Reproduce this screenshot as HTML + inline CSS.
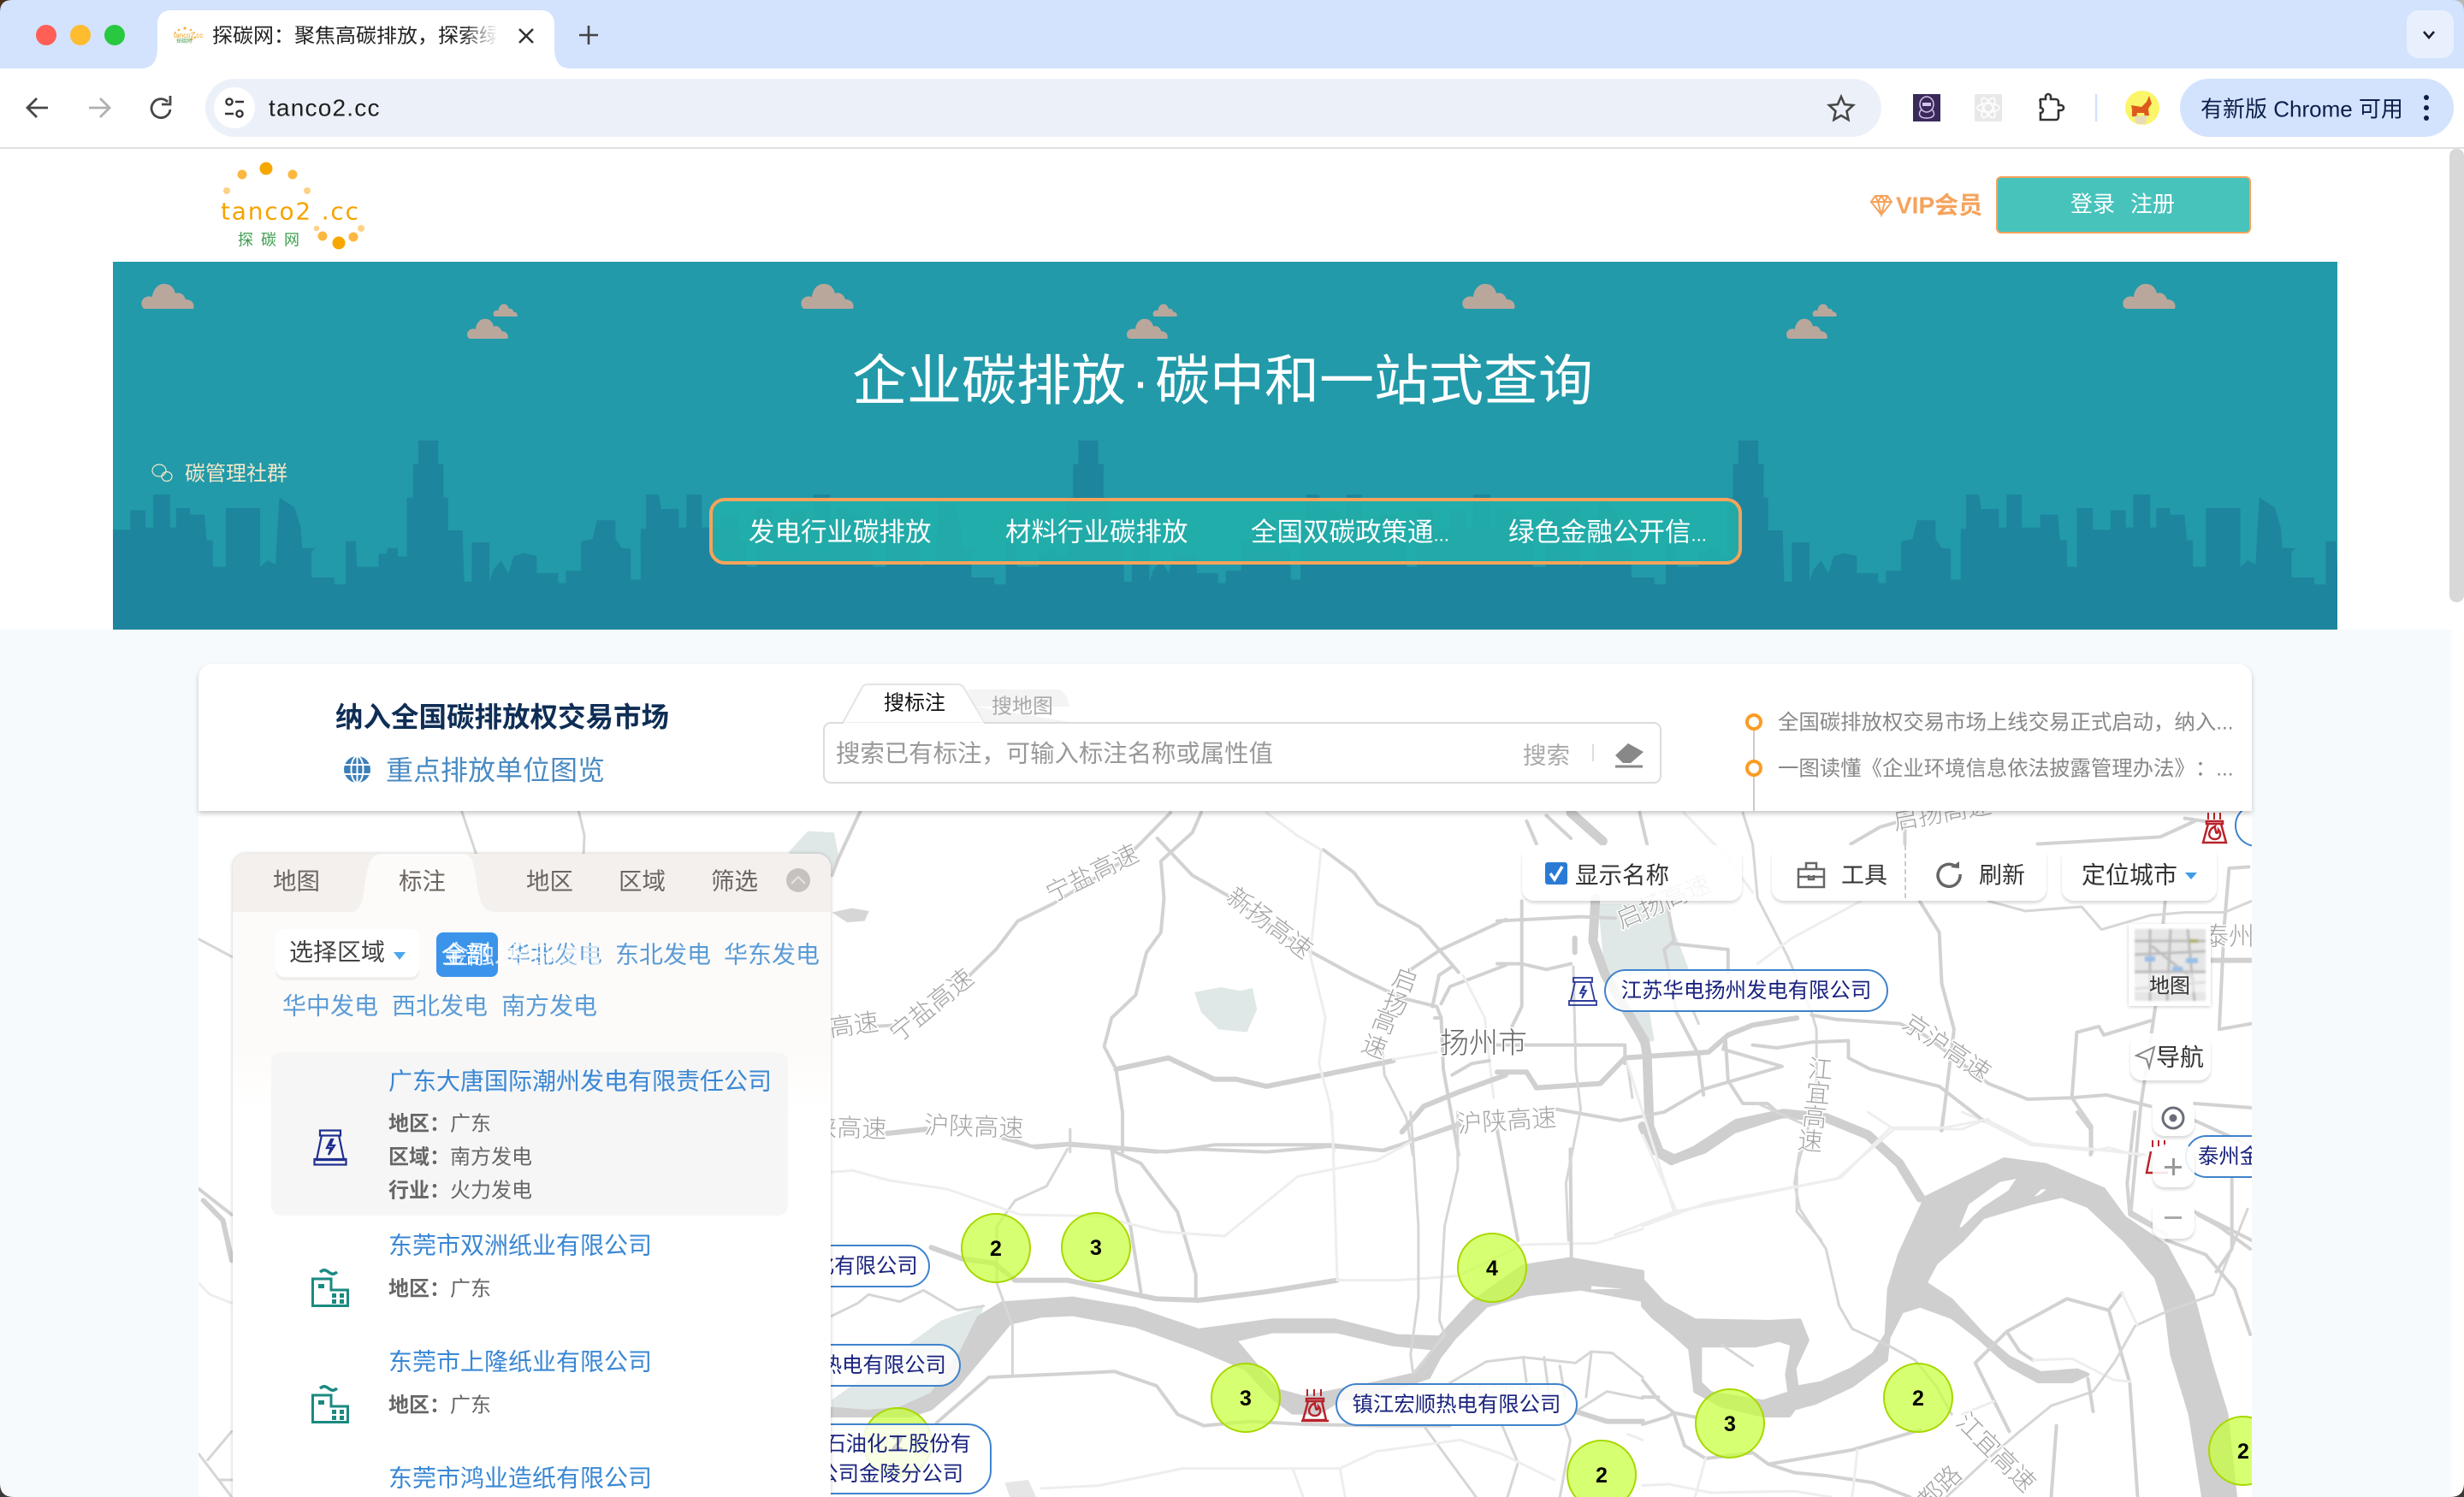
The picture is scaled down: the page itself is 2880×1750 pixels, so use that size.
<!DOCTYPE html>
<html lang="zh"><head><meta charset="utf-8"><title>探碳网</title>
<style>
html,body{margin:0;padding:0;width:2880px;height:1750px;overflow:hidden;background:#fff}
body{position:relative;font-family:"Liberation Sans","Noto Sans CJK SC",sans-serif;color:#222}
.a{position:absolute}
.t{position:absolute;white-space:nowrap;line-height:1;transform:translateY(1.5px);text-spacing-trim:space-all}
svg{position:absolute;overflow:visible}
.r,.m,.b,.l,.n{fill:none;vector-effect:non-scaling-stroke;stroke-linejoin:round;stroke-linecap:round}
.r{stroke:#d2d2d2;stroke-width:4}
.n{stroke:#d6d6d6;stroke-width:3}
.m{stroke:#d0d0d0;stroke-width:6}
.b{stroke:#cfcfcf;stroke-width:11}
.l{stroke:#eeeeee;stroke-width:3}
.rv{fill:#cfcfcf;stroke:#cfcfcf;stroke-width:4;stroke-linejoin:round;vector-effect:non-scaling-stroke}
.ml{font-size:29px;fill:#a3a3a3;stroke:#fff;stroke-width:3px;paint-order:stroke;text-anchor:middle;font-family:"Noto Sans CJK SC",sans-serif;font-weight:300}
.cl{position:absolute;white-space:nowrap;box-sizing:border-box;border:2px solid #3f83cc;border-radius:25px;background:rgba(255,255,255,.82);color:#1a237e;font-size:24.400px;line-height:48px;height:50px;text-align:center}
.ctl{position:absolute;background:rgba(255,255,255,.88);border-radius:14px;box-shadow:0 3px 3px rgba(0,0,0,.14)}
.blue{color:#5a9bd6}
.link{color:#3a87d4}
.lab{font-weight:700;color:#666}
.val{color:#666}
</style></head>
<body>
<!-- page background below banner -->
<div class="a" style="left:0;top:736px;width:2865px;height:1014px;background:#f7fafd"></div>
<div class="a" style="left:2865px;top:704px;width:15px;height:1046px;background:#fff"></div>
<!-- chrome -->
<div class="a" style="left:0;top:0;width:2880px;height:80px;background:#d3e3fd"></div>
<svg style="left:0;top:0" width="2880" height="180">
<path d="M165 80c14 0 19-10 19-24V28c0-10 6-16 16-16h432c10 0 16 6 16 16v28c0 14 5 24 18 24z" fill="#fff"/>
<circle cx="54" cy="41" r="12" fill="#ff5f57"/><circle cx="94" cy="41" r="12" fill="#febc2e"/><circle cx="134" cy="41" r="12" fill="#28c840"/>
<g fill="#f5b041"><circle cx="216" cy="33" r="1.6"/><circle cx="209" cy="35" r="1.3"/><circle cx="223" cy="35" r="1.3"/><circle cx="205" cy="38" r="1"/><circle cx="227" cy="38" r="1"/><circle cx="224" cy="46" r="1.5"/><circle cx="228" cy="44" r="1.2"/></g>
<text x="203" y="44" font-size="8" fill="#f0a020" font-family="Liberation Sans">tanco2.cc</text>
<text x="206" y="50" font-size="6" fill="#4a9f55" font-family="Noto Sans CJK SC">探碳网</text>
<path d="M607 34l16 16M623 34l-16 16" stroke="#333" stroke-width="2.6"/>
<path d="M688 30v22M677 41h22" stroke="#444" stroke-width="2.6"/>
<rect x="2813" y="12" width="55" height="56" rx="14" fill="#e9f0fd"/>
<path d="M2833 37l6 7 6-7" stroke="#1c1c2c" stroke-width="2.6" fill="none"/>
<path d="M0 180V92q0-12 12-12h2856q12 0 12 12v88z" fill="#fff"/>
<path d="M0 173h2880" stroke="#e0e0e0" stroke-width="2"/>
<path d="M56 126H33M43 115l-11 11 11 11" stroke="#474747" stroke-width="2.8" fill="none"/>
<path d="M104 126h23M117 115l11 11-11 11" stroke="#b0b0b0" stroke-width="2.8" fill="none"/>
<path d="M196 119a11 11 0 1 0 3 9" stroke="#474747" stroke-width="2.8" fill="none"/><path d="M199 112v10h-10" stroke="#474747" stroke-width="2.8" fill="none"/>
<rect x="240" y="92" width="1959" height="68" rx="34" fill="#ecf1f9"/>
<rect x="250" y="102" width="48" height="48" rx="24" fill="#fff"/>
<circle cx="268" cy="119" r="3.6" fill="none" stroke="#333" stroke-width="2.4"/><path d="M275 119h10M263 133h10" stroke="#333" stroke-width="2.6"/><circle cx="280" cy="133" r="3.6" fill="none" stroke="#333" stroke-width="2.4"/>
<path d="M2152 113l4 9 10 1-7.500 7 2 10-8.500-5-8.500 5 2-10-7.500-7 10-1z" fill="none" stroke="#474747" stroke-width="2.6"/>
<rect x="2236" y="110" width="32" height="32" fill="#3a2a5c"/>
<ellipse cx="2252" cy="122" rx="8" ry="9" fill="none" stroke="#d5c3ec" stroke-width="1.5"/><path d="M2246 128c-4 4-4 10 6 10s10-6 6-10" fill="none" stroke="#d5c3ec" stroke-width="1.500"/><rect x="2247" y="120" width="10" height="4" fill="#d5c3ec"/>
<rect x="2308" y="110" width="32" height="32" rx="2" fill="#e8e8e8"/>
<g fill="none" stroke="#fff" stroke-width="1.600"><ellipse cx="2324" cy="126" rx="13" ry="5"/><ellipse cx="2324" cy="126" rx="13" ry="5" transform="rotate(60 2324 126)"/><ellipse cx="2324" cy="126" rx="13" ry="5" transform="rotate(120 2324 126)"/></g>
<path d="M2387 116h6v-3a3 3 0 0 1 6 0v3h6a3 3 0 0 1 3 3v4h3a3 3 0 0 1 0 6h-3v8a3 3 0 0 1-3 3h-18v-8a3 3 0 0 0 0-6v-7a3 3 0 0 1 0-3z" fill="none" stroke="#333" stroke-width="2.600" transform="translate(-2 0)"/>
<path d="M2450 110v32" stroke="#d3e3fd" stroke-width="2.500"/>
<circle cx="2504" cy="126" r="20" fill="#fbf56a"/>
<path d="M2491 123l12 2 6-6 3-7 3 9-4 6 1 8-5 1-1-4-8 0-1 5-5-1 0-8z" fill="#dd5a1e"/><path d="M2494 136l16-1-2 10h-11z" fill="#e8ddb8"/>
<rect x="2548" y="92" width="320" height="68" rx="34" fill="#d3e3fd"/>
<g fill="#0b1f4b"><circle cx="2836" cy="114" r="3"/><circle cx="2836" cy="126" r="3"/><circle cx="2836" cy="138" r="3"/></g>
</svg>
<div class="t" style="left:248px;top:29px;width:332px;overflow:hidden;font-size:24px;color:#222">探碳网：聚焦高碳排放，探索绿色</div>
<div class="a" style="left:540px;top:26px;width:42px;height:30px;background:linear-gradient(90deg,rgba(255,255,255,0),#fff)"></div>
<div class="t" style="left:314px;top:111px;font-size:28px;letter-spacing:1.200px;color:#1f1f1f">tanco2.cc</div>
<div class="t" style="left:2572px;top:113px;font-size:26px;color:#0b1f4b">有新版 Chrome 可用</div>

<!-- site header -->
<svg style="left:0;top:0" width="2880" height="300">
<g fill="#f6a800"><circle cx="311" cy="197" r="7.500"/><circle cx="396" cy="284" r="7.500"/></g>
<g fill="#fbb740"><circle cx="283" cy="204" r="5.500"/><circle cx="342" cy="204" r="5.500"/><circle cx="377" cy="276" r="5.500"/><circle cx="413" cy="277" r="5.500"/></g>
<g fill="#fdd186"><circle cx="265" cy="223" r="4"/><circle cx="359" cy="223" r="4"/><circle cx="370" cy="267" r="3.200"/><circle cx="422" cy="267" r="4"/></g>
</svg>
<div class="t" style="left:258px;top:232px;font-size:28px;letter-spacing:1.800px;color:#f5a300;font-family:'DejaVu Sans',sans-serif">tanco2 .cc</div>
<div class="t" style="left:278px;top:270px;font-size:18px;letter-spacing:9px;color:#3f9f4f">探碳网</div>
<svg style="left:2186px;top:228px" width="26" height="24"><path d="M6 1h14l5 7-12 15L1 8zM1 8h24M9 8l4 15 4-15M6 1l3 7 4-7 4 7 3-7" fill="none" stroke="#f5a35c" stroke-width="2"/></svg>
<div class="t" style="left:2216px;top:225px;font-size:28px;font-weight:700;color:#f5a35c">VIP会员</div>
<div class="a" style="left:2333px;top:206px;width:298px;height:67px;box-sizing:border-box;background:#47c3bc;border:2px solid #f5a35c;border-radius:6px"></div>
<div class="t" style="left:2420px;top:224px;font-size:26px;color:#fff">登录</div>
<div class="t" style="left:2490px;top:224px;font-size:26px;color:#fff">注册</div>
<div class="a" style="left:2863px;top:174px;width:17px;height:530px;background:#d8d8d8;border-radius:8px"></div>

<!-- banner -->
<div class="a" style="left:132px;top:306px;width:2600px;height:430px;overflow:hidden;background:#229aa9">
<svg style="left:-132px;top:-306px" width="2880" height="1750">
<defs>
<polygon id="sky" points="2,958 25,958 25,890 45,890 45,950 55,950 55,835 77,835 77,950 85,950 85,882 103,882 103,905 122,905 125,995 133,995 133,1088 150,1088 150,882 195,882 195,1088 205,1065 215,1080 217,980 220,845 240,880 248,950 250,1022 268,1022 262,1035 262,1125 292,1125 292,1150 307,1150 307,998 320,998 322,1088 350,1088 350,1042 360,1042 362,1022 375,1022 375,1052 387,1052 387,845 395,845 395,728 402,728 402,645 428,645 428,728 435,728 435,845 441,845 441,960 460,960 462,1140 472,1140 472,1002 495,1002 495,1140 500,1100 510,1065 520,1110 527,1050 540,1040 557,1050 557,1110 585,1110 585,1145 595,1145 595,1102 615,1102 615,1000 630,990 636,925 660,925 660,988 668,1022 680,1025 680,1133 693,1133 693,955 700,955 700,835 717,835 720,885 743,885 743,950 753,950 753,835 773,835 773,950 797,950 797,905 820,905 823,995 832,995 832,1088 845,1088 845,882 866,882 866,958 866,1310 2,1310"/>
<path id="c" d="M6 30C1 30 0 22 3 19C6 15 11 15 14 16C15 6 22 0 29 1C36 1 40 7 41 12C46 10 51 13 53 19C60 19 64 24 62 30Z" fill="#baa79c"/>
</defs>
<g transform="translate(130,300) scale(.8929,.3333)" fill="#1e859e">
<use href="#sky"/><use href="#sky" x="864"/><use href="#sky" x="1728"/><use href="#sky" x="2592"/>
</g>
<use href="#c" transform="translate(164,331)"/><use href="#c" transform="translate(935,331)"/><use href="#c" transform="translate(1708,331)"/><use href="#c" transform="translate(2480,331)"/>
<use href="#c" transform="translate(545,372) scale(.78,.8)"/><use href="#c" transform="translate(1316,372) scale(.78,.8)"/><use href="#c" transform="translate(2087,372) scale(.78,.8)"/>
<use href="#c" transform="translate(576,355) scale(.46,.5)"/><use href="#c" transform="translate(1347,355) scale(.46,.5)"/><use href="#c" transform="translate(2118,355) scale(.46,.5)"/>
<g fill="none" stroke="#f2e6c8" stroke-width="1.200"><ellipse cx="186" cy="550" rx="8" ry="7"/><ellipse cx="195" cy="557" rx="6" ry="5.500"/></g>
</svg>
</div>
<div class="t" style="left:996px;top:412px;font-size:64px;color:#fff">企业碳排放<span style="display:inline-block;width:34px;text-align:center">·</span>碳中和一站式查询</div>
<div class="t" style="left:216px;top:541px;font-size:24px;color:#f2e6c8">碳管理社群</div>
<div class="a" style="left:829px;top:582px;width:1207px;height:78px;box-sizing:border-box;background:rgba(34,176,170,.86);border:4px solid #f5a35c;border-radius:18px"></div>
<div class="t" style="left:875px;top:606px;font-size:30.500px;color:#fff">发电行业碳排放</div>
<div class="t" style="left:1175px;top:606px;font-size:30.500px;color:#fff">材料行业碳排放</div>
<div class="t" style="left:1462px;top:606px;font-size:30.500px;color:#fff">全国双碳政策通<span style="font-size:22px">...</span></div>
<div class="t" style="left:1763px;top:606px;font-size:30.500px;color:#fff">绿色金融公开信<span style="font-size:22px">...</span></div>

<!-- map -->
<div class="a" style="left:0;top:0;width:2880px;height:1750px;clip-path:inset(948px 248px 0 232px)">
<div class="a" style="left:232px;top:948px;width:2400px;height:802px;background:#fff"></div>
<svg style="left:0;top:0" width="2880" height="1750">
<!-- zoom 5 -->
<g transform="translate(230,750) scale(.5102,.3333)">
<path class="n" d="M607 595L640 745M875 595L888 680L886 745M0 1040L80 1105"/>
<path d="M1355 740L1400 665L1460 670L1470 750L1455 810Z" fill="#dfe8e7"/>
<path d="M1455 950L1500 935L1540 945L1530 980L1490 985Z" fill="#d6d6d6"/>
<path class="r" d="M1520 595L1470 760L1455 820"/>
</g>
<!-- zoom 6 -->
<g transform="translate(230,1240) scale(.5102,.3333)">
<path class="r" d="M5 450L80 540"/><path class="m" d="M15 490L60 560L80 700"/><path class="l" d="M5 780L30 820L80 850"/><path class="n" d="M80 1300L25 1400M5 1380L40 1450L80 1530M50 1470H80"/>
</g>
<!-- zoom 10 -->
<g transform="translate(960,950) scale(.5102,.3333)">
<path d="M855 630L915 612L960 625L988 615L998 690L975 770L910 760L870 700Z" fill="#dfe8e7"/>
<path class="r" d="M120 750L170 745M340 570L400 480L450 380L530 320L680 180L730 110L800 0"/>
<path class="r" d="M870 0L850 70L778 170L785 300L778 420L745 490L720 640L665 720L648 820L675 900L690 1050L690 1190"/>
<path class="r" d="M770 90L850 220L930 290L1100 470L1220 570L1330 650L1410 680L1420 720L1405 720"/>
<path class="m" d="M675 900L795 860L900 935L950 935L1020 960L1310 870"/><path class="l" d="M1310 865L1410 840"/>
<path class="r" d="M1150 130L1220 210L1275 320L1370 400L1460 560"/>
<path class="r" d="M1350 550L1420 480L1568 375"/>
<path class="r" d="M1400 680L1415 570L1445 540M1420 670L1440 610L1568 535"/>
<path class="n" d="M1285 830L1290 920L1340 1070L1355 1200"/>
<path class="l" d="M1020 0L1090 80L1145 130L1120 500L1155 720L1140 880L1165 1020L1175 1190"/>
<path class="l" d="M1470 570L1520 720L1540 1000"/>
<path class="r" d="M1420 720L1425 900L1460 1200"/>
<path class="m" d="M1330 1120L1380 1030L1460 980L1568 920"/>
<path class="r" d="M1445 920L1490 880L1530 870"/>
<path class="m" d="M150 1125L240 1110"/>
<path class="r" d="M410 1140L480 1170L570 1160L650 1170L790 1190L900 1165L1170 1165L1290 1185L1460 1090"/>
<path class="n" d="M570 1110V1190"/>
</g>
<!-- zoom 8 -->
<g transform="translate(960,1300) scale(.6122,.3333)">
<path d="M20 1010L230 730L310 680L305 710L265 850L210 990L150 1040L75 1050L20 1040Z" fill="#dfe8e7"/>
<path class="rv" fill-rule="evenodd" d="M20 1040L90 1050L150 1040L210 990L265 850L300 720L345 670L480 653L600 690L720 765L860 730L980 730L1100 785L1180 790L1240 670L1340 540L1430 515L1568 560V660L1450 620L1350 640L1270 680L1210 790L1180 860L1160 930L1080 980L990 1010L950 1055L900 1055L860 1000L810 900L720 830L600 750L480 710L420 715L360 740L310 850L260 960L210 1040L170 1065L20 1065ZM790 800L870 975L920 1000L1060 950L1130 920L1170 830L1090 815L985 770L860 770Z"/>
<path d="M1470 610L1530 620L1470 622Z" fill="#fff"/>
<path class="r" d="M370 100L410 125L470 115L640 140L720 130L850 140L970 120L1070 135L1130 100L1220 45"/>
<path class="n" d="M475 60V110M470 130L430 260L370 310L335 400L335 600L365 750L365 920"/>
<path class="r" d="M555 135L610 180L680 350L715 570V660M555 135L565 280L590 400L610 630"/>
<path class="m" d="M210 475L270 515L330 530L370 590L470 590L640 655L720 660L850 630L985 590"/>
<path class="l" d="M985 590L1100 590L1215 575L1340 465L1480 460L1568 410"/>
<path class="l" d="M20 210L60 205L130 240L240 270L380 360L530 365L650 420L770 435L910 225L1060 170L1130 100"/>
<path class="l" d="M975 0L985 590"/>
<path class="n" d="M1125 0L1130 120L1140 400V650L1125 850L1130 920M1215 0V200L1190 400L1180 730L1190 780L1130 920"/>
<path class="r" d="M1290 60L1330 450M1430 130L1432 510"/>
<path class="n" d="M20 715L70 670L90 640L150 665L195 625L260 695L310 680"/>
<path class="r" d="M220 1090L320 930L445 920L560 910L640 960L680 1060L730 1100L820 1085L920 1095L1060 1100L1200 1100"/>
<path class="n" d="M1200 950L1270 875L1340 860L1440 880L1470 840L1510 845L1568 930M1340 860L1350 1000M1380 860L1390 1000M1470 845L1460 1000M1410 890L1420 1000M1440 1050L1500 980L1568 1005M1420 1100L1430 1150L1410 1350M1300 1100L1330 1230L1310 1350M1150 1100L1250 1350"/>
<path class="m" d="M1440 1050L1500 1085H1568"/>
<path class="l" d="M420 1320L530 1310L690 1250L990 1250L1000 1350M900 1250L920 1350M990 1250L1060 1190L1220 1150L1300 1200L1400 1290M1540 1130L1568 1150"/>
<path d="M350 1300L395 1290L410 1350H360Z" fill="#e6e6e6"/>
</g>
<!-- zoom 9 -->
<g transform="translate(1920,1300) scale(.6122,.3333)">
<path class="rv" fill-rule="evenodd" d="M0 590L40 670L100 730L240 735L300 730L315 800L290 900L295 965L340 950L400 900L440 850L465 780L470 620L490 500L530 340L540 300L640 210L690 165L770 185L880 270L920 370L1000 470L1050 640L1085 880L1115 1060L1132 1350L1070 1350L1045 1060L1010 850L1000 700L980 580L920 450L850 330L800 295L740 320L650 370L610 450L560 530L540 600L590 660L650 780L700 860L760 915L830 905L850 920L820 945L755 945L700 890L640 790L590 720L530 680L495 700L470 790L465 870L400 960L330 1020L290 1040L280 1065L230 1065L150 1030L100 980L90 830L60 780L20 720L0 680ZM110 820L215 820L260 800L285 815L275 920L280 985L230 1015L130 985L110 950ZM600 410L620 320L680 240L720 225L700 280L650 340L610 410ZM735 310L760 265L780 265L760 295Z"/>
<path class="b" d="M0 50L20 130L55 170L100 135L180 40L270 5L350 20L430 80L490 180L530 300"/>
<path class="n" d="M150 815L210 890" stroke-width="2"/>
<path class="n" d="M300 130L290 250L300 340L350 480L375 680L400 760L470 820L520 870L560 960L590 1060"/>
<path class="r" d="M810 655L890 695L915 635M810 655L695 770L635 880L670 1010L700 1120M890 695L930 950L945 1350M695 770L720 840L745 870"/>
<path class="l" d="M745 870L820 865L900 940L930 945"/>
<path class="n" d="M1155 340L1120 500L1090 640L1000 700L940 750L900 880L860 980L780 1030L720 1120L650 1230L580 1350"/>
<path class="r" d="M1060 360L1100 400L1160 480M1000 450L1075 500L1130 620L1160 780M940 0L925 250L930 360L1000 430M830 0L855 60V150M1125 230V480L1095 560M575 0L570 65"/>
<path class="l" d="M430 0L480 60L610 60L650 30L740 115L860 135L890 125L950 155M610 0L650 30M480 60L370 235L120 320L0 400M0 80L65 350M610 1060L670 1015M915 635L945 750"/>
<path class="r" d="M790 1100L780 1350M850 935L860 1050"/>
<path class="r" d="M0 1095L45 1070L60 1055L100 1070M60 1060L80 1170L120 1215L210 1195L240 1235L400 1185L530 1115M240 1235L290 1265L350 1275L440 1300L510 1350M0 940L30 1010L60 1055M0 1000H30"/>
<path class="l" d="M120 1215L100 1350M410 1185L400 1350M0 1310L50 1305L130 1335L290 1330L360 1350"/>
</g>
<!-- zoom 7 -->
<g transform="translate(1750,950) scale(.5741,.3333)">
<path d="M205 320H340L390 550L220 580ZM260 700H310L320 800L290 810Z" fill="#dfe8e7"/>
<path class="b" d="M200 300L195 450L220 570L300 800L305 850" stroke-width="9"/>
<path class="b" d="M150 0L215 100" stroke-width="12"/>
<path class="m" d="M158 440V490"/>
<path class="b" d="M305 850L310 1100L330 1190L360 1215L420 1180L480 1110L570 1060"/>
<path class="r" d="M0 380L170 365L240 370M50 310V680L30 750M60 30L80 110M100 10L150 90M290 0L305 110"/>
<path class="r" d="M345 310L360 450L340 480L365 700L410 850L420 990M360 460L470 480V560"/>
<path class="n" d="M500 0L520 110L530 300L590 500L640 700L650 760L650 1000L610 1250V1400L660 1500"/>
<path class="m" d="M610 720L520 745L470 780L430 840L260 860L210 950L80 965L60 910H0"/>
<path class="r" d="M0 530H50L100 550L150 530M0 815H260V880"/>
<path class="r" d="M640 710L690 725L820 740L870 780L1000 950L1080 1005L1170 1000L1240 990L1330 1030"/>
<path class="r" d="M520 815L570 825L640 805L715 800V860L760 900L900 960L990 1080"/>
<path class="r" d="M860 310L900 420L905 600L930 760L905 1115"/>
<path class="r" d="M1360 310L1340 680L1310 1030L1290 1400L1340 1450"/>
<path class="r" d="M1180 770L1225 750L1235 780L1330 730M1180 770L1170 1000L1210 1100V1195M1530 190L1490 195L1480 400L1470 760L1536 740M1420 1020L1536 1035M1420 1080L1536 1170"/>
<path class="l" d="M380 0L470 160L520 280M740 310L600 440L530 530M1000 1075L910 1105L800 1105L700 1280L360 1400L240 1480M1000 1080L1090 1160L1210 1180L1320 1200"/>
<path class="r" d="M1100 110L1350 85L1420 30M720 110L780 50L840 20M830 0V110M1400 20L1440 30"/>
<path class="n" d="M1000 310L1075 345L1190 330L1230 410L1330 360L1400 350L1480 350L1536 310" stroke-width="2"/>
<path class="m" d="M1450 518H1536"/>
<path class="r" d="M120 1040L250 1080L340 1050L420 970L580 890L460 830L465 800M465 800L470 940L500 1020L550 1020L570 1050"/>
<path class="n" d="M155 540L160 900L170 1040L140 1300L145 1500M265 880L275 1000M530 1020L620 1090"/>
<path class="l" d="M265 880L360 1400"/>
<path class="r" d="M1420 1400L1536 1500"/>
<path class="n" d="M400 700L410 740"/>
</g>
<text class="ml" transform="translate(1281,1030) rotate(-26)">宁盐高速</text>
<text class="ml" transform="translate(1095,1183) rotate(-39)">宁盐高速</text>
<text class="ml" transform="translate(985,1210) rotate(-8)">盐高速</text>
<text class="ml" transform="translate(1478,1087) rotate(37)">新扬高速</text>
<text class="ml" transform="translate(2270,1233) rotate(34)">京沪高速</text>
<text class="ml" transform="translate(1948,1063) rotate(-23)">启扬高速</text>
<text class="ml" transform="translate(2272,960) rotate(-10)">启扬高速</text>
<text class="ml" transform="translate(1138,1327) rotate(2)">沪陕高速</text>
<text class="ml" transform="translate(978,1328) rotate(2)">沪陕高速</text>
<text class="ml" transform="translate(1762,1320) rotate(-4)">沪陕高速</text>
<text class="ml" transform="translate(2605,1105)" style="font-size:30px">泰州</text>
<text class="ml" transform="translate(2326,1705) rotate(45)">江宜高速</text>
<text class="ml" transform="translate(2264,1756) rotate(-45)">江都路</text>
<text class="ml" transform="translate(1756,1644)" style="font-size:32px;fill:#d4d4d4">镇江市</text>
<text class="ml" transform="translate(1734,1231)" style="font-size:34px;fill:#666">扬州市</text>
<g><text class="ml" transform="translate(2127,1260) rotate(5)">江</text><text class="ml" transform="translate(2124,1288) rotate(5)">宜</text><text class="ml" transform="translate(2120,1316) rotate(5)">高</text><text class="ml" transform="translate(2115,1344) rotate(5)">速</text></g>
<g><text class="ml" transform="translate(1639,1155) rotate(20)">启</text><text class="ml" transform="translate(1628,1182) rotate(20)">扬</text><text class="ml" transform="translate(1615,1204) rotate(20)">高</text><text class="ml" transform="translate(1603,1233) rotate(20)">速</text></g>
<!-- clusters -->
<g fill="rgba(200,255,60,.72)" stroke="#a8d800" stroke-width="2">
<circle cx="1164" cy="1459" r="40"/><circle cx="1281" cy="1458" r="40"/><circle cx="1744" cy="1482" r="40"/><circle cx="1456" cy="1634" r="40"/><circle cx="1049" cy="1686" r="40"/><circle cx="1872" cy="1724" r="40"/><circle cx="2022" cy="1664" r="40"/><circle cx="2242" cy="1634" r="40"/><circle cx="2622" cy="1696" r="40"/>
</g>
<g font-family="Liberation Sans" font-weight="700" font-size="25" text-anchor="middle" fill="#000">
<text x="1164" y="1468">2</text><text x="1281" y="1467">3</text><text x="1744" y="1491">4</text><text x="1456" y="1643">3</text><text x="1049" y="1695">2</text><text x="1872" y="1733">2</text><text x="2022" y="1673">3</text><text x="2242" y="1643">2</text><text x="2622" y="1705">2</text>
</g>
<!-- POI icons -->
<g transform="translate(1833,1142)" fill="none" stroke="#2b3a9a" stroke-width="1.800"><rect x="6" y="1" width="22" height="5"/><path d="M8 6L3 28H31L26 6"/><rect x="1" y="28" width="32" height="5"/><path d="M18 11l-4 8h4l-2 6 5-9h-4l2-5z"/></g>
<g transform="translate(1520,1622)" fill="none" stroke="#b8232b" stroke-width="2.500"><path d="M8 10V2M16 10V2M24 10V2" stroke-width="2"/><rect x="7" y="13" width="20" height="3"/><path d="M9 16L3 38H30L25 16"/><path d="M1 39H33"/><path d="M12 22c-4 6-1 11 5 11s8-6 4-11c0 4-3 5-3 2s-2-3-1-6c-2 1-5 3-5 4z"/></g>
<g transform="translate(2572,950)" fill="none" stroke="#b8232b" stroke-width="2.500"><path d="M9 8V0M16 8V0M23 8V0" stroke-width="2"/><rect x="7" y="10" width="19" height="3"/><path d="M9 13L3 35H30L24 13"/><path d="M12 20c-4 6-1 11 5 11s8-6 4-11c0 4-3 5-3 2s-2-3-1-6c-2 1-5 3-5 4z"/></g>
<g transform="translate(2508,1333)" fill="none" stroke="#b8232b" stroke-width="2.500"><path d="M8 8V0M15 8V0M22 8V0" stroke-width="2"/><path d="M6 13L1 38H26"/></g>
</svg>
<div class="cl" style="left:1875px;top:1133px;width:332px">江苏华电扬州发电有限公司</div>
<div class="cl" style="left:1561px;top:1617px;width:283px">镇江宏顺热电有限公司</div>
<div class="cl" style="left:900px;top:1455px;width:187px;text-align:right;padding-right:22px">庆石化有限公司</div>
<div class="cl" style="left:860px;top:1571px;width:263px;text-align:right;padding-right:22px">南京华润热电有限公司</div>
<div class="cl" style="left:800px;top:1664px;width:359px;height:83px;line-height:35px;text-align:right;padding:5px 22px 0 0;border-radius:28px">中国石油化工股份有<br><span style="margin-right:9px">限公司金陵分公司</span></div>
<div class="cl" style="left:2554px;top:1327px;width:200px;text-align:left;padding-left:13px">泰州金</div>
<div class="cl" style="left:2612px;top:940px;width:200px;text-align:left;padding-left:18px"></div>
<!-- controls -->
<div class="ctl" style="left:1779px;top:988px;width:257px;height:65px"></div>
<svg style="left:1806px;top:1008px" width="26" height="26"><rect width="26" height="26" rx="3" fill="#2b7bd4"/><path d="M6 13l5 7 9-15" stroke="#fff" stroke-width="3.500" fill="none"/></svg>
<div class="t" style="left:1841px;top:1008px;font-size:27.500px;color:#333">显示名称</div>
<div class="ctl" style="left:2071px;top:988px;width:321px;height:65px"></div>
<div class="a" style="left:2226px;top:988px;width:0;height:62px;border-left:2px dashed #ccc"></div>
<svg style="left:2100px;top:1007px" width="34" height="32"><path d="M2 9h30v21H2zM2 18h30M11 9V2h12v7M14 16v5h6v-5" fill="none" stroke="#666" stroke-width="2.500"/></svg>
<div class="t" style="left:2152px;top:1009px;font-size:27px;color:#333">工具</div>
<svg style="left:2262px;top:1006px" width="32" height="32"><path d="M24 7a13 13 0 1 0 5 9" fill="none" stroke="#666" stroke-width="3.500"/><path d="M18 8l10 1 0-8z" fill="#666"/></svg>
<div class="t" style="left:2313px;top:1009px;font-size:27px;color:#333">刷新</div>
<div class="ctl" style="left:2410px;top:988px;width:181px;height:65px"></div>
<div class="t" style="left:2433px;top:1008px;font-size:28px;color:#333">定位城市</div>
<svg style="left:2554px;top:1020px" width="14" height="8"><path d="M0 0h14l-7 8z" fill="#3d9bea"/></svg>
<div class="a" style="left:2488px;top:1080px;width:96px;height:96px;background:#fff;box-shadow:0 1px 4px rgba(0,0,0,.2)"></div>
<svg style="left:2495px;top:1086px;filter:blur(1px)" width="83" height="84">
<rect width="83" height="84" fill="#e6e6e6"/><path d="M0 14H83M0 30L83 26M0 50H83M18 0V84M42 0L38 84M62 0L70 84M0 70L83 62M20 20L70 60" stroke="#bdbdbd" stroke-width="3" fill="none"/>
<rect x="12" y="32" width="12" height="6" fill="#9cbfe8"/><rect x="60" y="34" width="14" height="6" fill="#9cbfe8"/><rect x="44" y="44" width="12" height="5" fill="#9cbfe8"/><rect x="64" y="12" width="10" height="4" fill="#b0b070"/>
<rect x="0" y="52" width="83" height="22" fill="#fff" fill-opacity=".5"/>
</svg>
<div class="t" style="left:2512px;top:1140px;font-size:24px;color:#333">地图</div>
<div class="ctl" style="left:2490px;top:1208px;width:94px;height:55px"></div>
<svg style="left:2495px;top:1222px" width="24" height="28"><path d="M23 2L2 12l12 4 3 10z" fill="none" stroke="#888" stroke-width="2"/></svg>
<div class="t" style="left:2520px;top:1221px;font-size:28px;color:#333">导航</div>
<div class="ctl" style="left:2516px;top:1283px;width:49px;height:45px"></div>
<svg style="left:2526px;top:1293px" width="28" height="28"><circle cx="14" cy="14" r="12" fill="none" stroke="#6a6e78" stroke-width="3"/><circle cx="14" cy="14" r="4.500" fill="#6a6e78"/></svg>
<div class="ctl" style="left:2516px;top:1338px;width:49px;height:50px"></div>
<div class="a" style="left:2530px;top:1363px;width:20px;height:3px;background:#999"></div><div class="a" style="left:2539px;top:1354px;width:3px;height:20px;background:#999"></div>
<div class="ctl" style="left:2516px;top:1402px;width:49px;height:46px"></div>
<div class="a" style="left:2530px;top:1422px;width:20px;height:3px;background:#aaa"></div>
</div>

<!-- left panel -->
<div class="a" style="left:272px;top:998px;width:699px;height:752px;border-radius:16px 16px 0 0;background:linear-gradient(#fdfbf9 0,#fdfbf9 230px,#fff 300px);box-shadow:0 0 5px rgba(0,0,0,.22)">
<div class="a" style="left:0;top:0;width:699px;height:68px;border-radius:16px 16px 0 0;background:#f3f0ed"></div>
</div>
<svg style="left:0;top:0" width="2880" height="1100"><path d="M409 1066C424 1066 424 1050 427 1030C430 1010 434 998 446 998H540C552 998 554 1010 557 1030C560 1050 562 1066 579 1066Z" fill="#fdfbf9"/>
<circle cx="933" cy="1029" r="14" fill="#c6c2be"/><path d="M925 1033l8-8 8 8" stroke="#e8e4e0" stroke-width="2" fill="none"/></svg>
<div class="t" style="left:319px;top:1015px;font-size:27.500px;color:#6b6560">地图</div>
<div class="t" style="left:466px;top:1015px;font-size:27.500px;color:#6b6560">标注</div>
<div class="t" style="left:615px;top:1015px;font-size:27.500px;color:#6b6560">地区</div>
<div class="t" style="left:723px;top:1015px;font-size:27.500px;color:#6b6560">区域</div>
<div class="t" style="left:831px;top:1015px;font-size:27.500px;color:#6b6560">筛选</div>
<div class="a" style="left:322px;top:1086px;width:168px;height:56px;background:#fff;border-radius:10px;box-shadow:0 4px 0 #f0edea"></div>
<div class="t" style="left:338px;top:1098px;font-size:28px;color:#444">选择区域</div>
<svg style="left:460px;top:1113px" width="14" height="9"><path d="M0 0h14l-7 9z" fill="#4aa6ee"/></svg>
<div class="a" style="left:510px;top:1090px;width:72px;height:52px;background:#3b94ea;border-radius:8px"></div>
<div class="t blue" style="left:592px;top:1101px;font-size:28px">华北发电</div>
<div class="t" style="left:516px;top:1101px;font-size:28px;color:#fff">全部</div>
<div class="t" style="left:518px;top:1101px;font-size:30px;color:rgba(255,255,255,.8)">金融发</div>
<div class="t" style="left:594px;top:1101px;font-size:28px;color:rgba(255,255,255,.75)">全部发电</div>
<div class="t blue" style="left:719px;top:1101px;font-size:28px">东北发电</div>
<div class="t blue" style="left:846px;top:1101px;font-size:28px">华东发电</div>
<div class="t blue" style="left:330px;top:1161px;font-size:28px">华中发电</div>
<div class="t blue" style="left:458px;top:1161px;font-size:28px">西北发电</div>
<div class="t blue" style="left:586px;top:1161px;font-size:28px">南方发电</div>
<div class="a" style="left:317px;top:1230px;width:604px;height:191px;background:#f6f6f6;border-radius:12px"></div>
<div class="t link" style="left:454px;top:1249px;font-size:28px">广东大唐国际潮州发电有限责任公司</div>
<div class="t" style="left:454px;top:1301px;font-size:24px"><span class="lab">地区：</span><span class="val">广东</span></div>
<div class="t" style="left:454px;top:1340px;font-size:24px"><span class="lab">区域：</span><span class="val">南方发电</span></div>
<div class="t" style="left:454px;top:1379px;font-size:24px"><span class="lab">行业：</span><span class="val">火力发电</span></div>
<svg style="left:366px;top:1320px" width="40" height="43"><g fill="none" stroke="#1f2f8f" stroke-width="2.200"><rect x="8" y="1.500" width="24" height="6"/><path d="M10 7L4 36H36L30 7"/><rect x="1.500" y="35" width="37" height="6.500"/><path d="M21 12l-5 10h5l-3 8 7-11h-5l3-7z"/></g></svg>
<div class="t link" style="left:454px;top:1441px;font-size:28px">东莞市双洲纸业有限公司</div>
<div class="t" style="left:454px;top:1494px;font-size:24px"><span class="lab">地区：</span><span class="val">广东</span></div>
<svg style="left:364px;top:1482px" width="44" height="46"><g fill="none" stroke="#1a8a82" stroke-width="3"><path d="M10 5c4-3 6-3 10 0s6 3 10 0" stroke-width="3.500"/><path d="M1.500 13H23V26H42.500V44.500H1.500Z"/></g><g fill="#1a8a82"><rect x="8" y="19" width="7" height="5"/><rect x="24" y="30" width="5" height="5"/><rect x="33" y="30" width="5" height="5"/><rect x="24" y="37" width="5" height="5"/><rect x="33" y="37" width="5" height="5"/></g></svg>
<div class="t link" style="left:454px;top:1577px;font-size:28px">东莞市上隆纸业有限公司</div>
<div class="t" style="left:454px;top:1630px;font-size:24px"><span class="lab">地区：</span><span class="val">广东</span></div>
<svg style="left:364px;top:1618px" width="44" height="46"><g fill="none" stroke="#1a8a82" stroke-width="3"><path d="M10 5c4-3 6-3 10 0s6 3 10 0" stroke-width="3.500"/><path d="M1.500 13H23V26H42.500V44.500H1.500Z"/></g><g fill="#1a8a82"><rect x="8" y="19" width="7" height="5"/><rect x="24" y="30" width="5" height="5"/><rect x="33" y="30" width="5" height="5"/><rect x="24" y="37" width="5" height="5"/><rect x="33" y="37" width="5" height="5"/></g></svg>
<div class="t link" style="left:454px;top:1713px;font-size:28px">东莞市鸿业造纸有限公司</div>

<!-- header card -->
<div class="a" style="left:232px;top:776px;width:2400px;height:172px;background:#fff;border-radius:16px 16px 0 0;box-shadow:0 3px 6px rgba(0,0,0,.22)"></div>
<div class="t" style="left:392px;top:821px;font-size:32.500px;font-weight:700;color:#0f2e56">纳入全国碳排放权交易市场</div>
<svg style="left:401px;top:883px" width="33" height="33"><circle cx="16.500" cy="16.500" r="15.500" fill="#3d7fb8"/><g fill="none" stroke="#fff" stroke-width="2"><ellipse cx="16.500" cy="16.500" rx="7" ry="15.500"/><path d="M16.500 0v33M1 11h31M1 22h31"/></g></svg>
<div class="t" style="left:451px;top:883px;font-size:32px;color:#4a8bc2">重点排放单位图览</div>
<svg style="left:0;top:0" width="2880" height="950">
<path d="M1151 845L1126 803Q1124 800 1118 800H1016Q1010 800 1008 803L985 845" fill="#fff" stroke="#e4e4e4" stroke-width="2"/>
<path d="M1140 826H1250Q1246 806 1236 806H1130L1151 845H1256Z" fill="#f4f4f4"/>
<rect x="963" y="845" width="978" height="70" rx="8" fill="#fff" stroke="#dcdcdc" stroke-width="2"/>
<path d="M986 846H1150" stroke="#fff" stroke-width="3"/>
<path d="M1862 870v20" stroke="#ddd" stroke-width="2"/>
<path d="M1903 869l-15 14 9 9h9l15-13z" fill="#888"/><path d="M1888 896h32" stroke="#888" stroke-width="3"/>
<path d="M2050 850V948" stroke="#ccc" stroke-width="2"/>
<circle cx="2050" cy="844" r="8" fill="#fff" stroke="#f99d25" stroke-width="4"/><circle cx="2050" cy="898" r="8" fill="#fff" stroke="#f99d25" stroke-width="4"/>
</svg>
<div class="t" style="left:1033px;top:809px;font-size:24px;color:#111">搜标注</div>
<div class="t" style="left:1159px;top:813px;font-size:24px;color:#aaa">搜地图</div>
<div class="t" style="left:977px;top:866px;font-size:28.400px;color:#999">搜索已有标注，可输入标注名称或属性值</div>
<div class="t" style="left:1780px;top:868px;font-size:27.500px;color:#aaa">搜索</div>
<div class="t" style="left:2078px;top:832px;font-size:24.400px;color:#888">全国碳排放权交易市场上线交易正式启动，纳入...</div>
<div class="t" style="left:2078px;top:886px;font-size:24.400px;color:#888">一图读懂《企业环境信息依法披露管理办法》：...</div>
<!-- window corners -->
<svg style="left:0;top:0" width="2880" height="1750">
<path d="M0 0H14Q0 0 0 14Z" fill="#4a3018"/><path d="M2880 0H2866Q2880 0 2880 14Z" fill="#b8b8b8"/>
<path d="M0 1750H16Q0 1750 0 1734Z" fill="#3a3a3a"/><path d="M2880 1750H2864Q2880 1750 2880 1734Z" fill="#3a3a3a"/>
</svg>
</body></html>
